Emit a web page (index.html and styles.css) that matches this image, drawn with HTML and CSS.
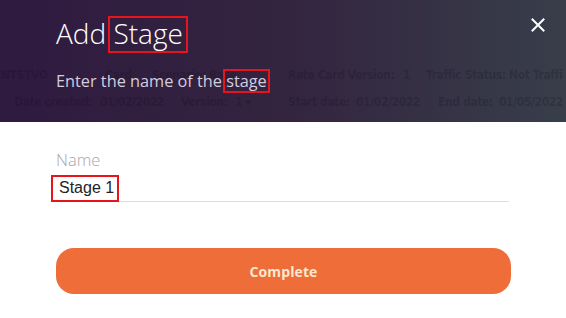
FILE: index.html
```html
<!DOCTYPE html>
<html lang="en">
<head>
<meta charset="utf-8">
<title>Add Stage</title>
<link rel="stylesheet" href="styles.css">
</head>
<body>
<div class="modal">
  <header class="head">
    <div class="backdrop" aria-hidden="true">
      <div class="bd-row bd-row1">
        <span class="w-105">ENTSTVO</span>
        <span class="w-47">Card</span>
        <span class="w-136">Scenario: Base</span>
        <span class="w-115">Rate Card Version:</span>
        <span class="w-23">1</span>
        <span>Traffic Status: Not Traffi</span>
      </div>
      <div class="bd-row bd-row2">
        <span class="w-86">Date created:</span>
        <span class="w-81">01/02/2022</span>
        <span class="w-54">Version:</span>
        <span class="w-53">1 ▾</span>
        <span class="w-68">Start date:</span>
        <span class="w-82">01/02/2022</span>
        <span class="w-61">End date:</span>
        <span>01/05/2022</span>
      </div>
    </div>
    <div class="head-text">
      <h1 class="title">Add <span class="mark mark-title">Stage</span></h1>
      <p class="subtitle">Enter the name of the <span class="mark mark-sub">stage</span></p>
    </div>
    <button class="close" type="button" aria-label="Close">
      <svg viewBox="0 0 14 14" width="14" height="14"><path d="M1.5 1.5 L12.5 12.5 M12.5 1.5 L1.5 12.5" stroke="#fff" stroke-width="2" stroke-linecap="square" fill="none"/></svg>
    </button>
  </header>
  <main class="body">
    <label class="label">Name</label>
    <div class="field"><span class="mark mark-input">Stage 1</span></div>
    <button class="complete" type="button">Complete</button>
  </main>
</div>
</body>
</html>
```

FILE: styles.css
```css
html, body {
  margin: 0;
  padding: 0;
  background: #ffffff;
}

.modal {
  width: 566px;
  height: 318px;
  overflow: hidden;
  font-family: "Open Sans", "DejaVu Sans", sans-serif;
}

.head {
  position: relative;
  height: 122px;
  box-sizing: border-box;
  padding: 13px 56px 0 56px;
  background: linear-gradient(90deg, #2f1a40 0%, #33243f 50%, #383e4a 100%);
  overflow: hidden;
}

.backdrop {
  position: absolute;
  left: 0;
  top: 66px;
  width: 566px;
  overflow: hidden;
  font-family: "DejaVu Sans Condensed", "DejaVu Sans", sans-serif;
  font-weight: 700;
  font-size: 12px;
  letter-spacing: -0.4px;
  color: rgba(12, 6, 22, 0.2);
  white-space: nowrap;
  display: flex;
  flex-direction: column;
  gap: 8px;
}

.bd-row {
  display: flex;
  height: 19px;
  line-height: 19px;
}

.bd-row1 { margin-left: -6px; }
.bd-row2 { padding-left: 14px; }

.bd-row span { flex: none; }

.w-105 { width: 111px; }
.w-47 { width: 47px; }
.w-136 { width: 136px; }
.w-115 { width: 115px; }
.w-23 { width: 23px; }
.w-86 { width: 86px; }
.w-81 { width: 81px; }
.w-54 { width: 54px; }
.w-53 { width: 53px; }
.w-68 { width: 68px; }
.w-82 { width: 82px; }
.w-61 { width: 61px; }

.head-text {
  position: relative;
}

.title {
  margin: 0;
  font-size: 28px;
  font-weight: 300;
  color: #ffffff;
  line-height: normal;
  padding-top: 1px;
}

.subtitle {
  margin: 16px 0 0 0;
  font-size: 16.3px;
  font-weight: 400;
  color: #d4cddd;
  line-height: normal;
}

.mark {
  border: 2px solid #e8141b;
}

.mark-title {
  display: inline-block;
  line-height: 30px;
  padding: 0 3px 3px 3px;
  margin-left: -5px;
}

.mark-sub {
  display: inline-block;
  line-height: 20px;
  padding: 0 1px;
  margin-left: -3px;
}

.close {
  position: absolute;
  top: 18px;
  right: 21px;
  width: 14px;
  height: 14px;
  padding: 0;
  border: 0;
  background: none;
  display: flex;
}

.body {
  padding: 27px 57px 0 56px;
  display: flex;
  flex-direction: column;
}

.label {
  font-size: 16.5px;
  font-weight: 300;
  color: #a6a6a6;
  line-height: 21px;
}

.field {
  margin-top: 5px;
  border-bottom: 1px solid #dedede;
  height: 26px;
  font-family: "Liberation Sans", Arial, sans-serif;
  font-size: 16px;
  color: #222222;
}

.mark-input {
  display: inline-block;
  margin-left: -5px;
  padding: 1px 3px 3px 6px;
  line-height: 19px;
}

.complete {
  margin-top: 46px;
  margin-right: -2px;
  height: 46px;
  border: 0;
  border-radius: 18px;
  background: #ee6d38;
  color: #fde8cf;
  font-family: "Open Sans", sans-serif;
  font-weight: 700;
  font-size: 14px;
  letter-spacing: 0.1px;
}
```
